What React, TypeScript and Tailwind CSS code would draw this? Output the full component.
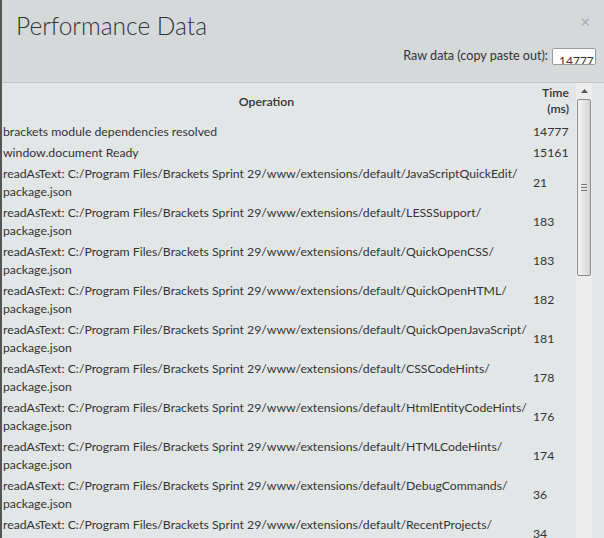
import React from "react"

const base = "C:/Program Files/Brackets Sprint 29/www/extensions/default/"

type Row = { op: string; sub?: string; ms: number }

const rows: Row[] = [
  { op: "brackets module dependencies resolved", ms: 14777 },
  { op: "window.document Ready", ms: 15161 },
  { op: "JavaScriptQuickEdit", sub: "package.json", ms: 21 },
  { op: "LESSSupport", sub: "package.json", ms: 183 },
  { op: "QuickOpenCSS", sub: "package.json", ms: 183 },
  { op: "QuickOpenHTML", sub: "package.json", ms: 182 },
  { op: "QuickOpenJavaScript", sub: "package.json", ms: 181 },
  { op: "CSSCodeHints", sub: "package.json", ms: 178 },
  { op: "HtmlEntityCodeHints", sub: "package.json", ms: 176 },
  { op: "HTMLCodeHints", sub: "package.json", ms: 174 },
  { op: "DebugCommands", sub: "package.json", ms: 36 },
  { op: "RecentProjects", sub: "package.json", ms: 34 },
]

function Scrollbar() {
  return (
    <div className="flex w-[16px] shrink-0 flex-col bg-[#ededee]">
      {/* up arrow */}
      <div className="flex h-[16px] items-center justify-center">
        <svg width="7" height="4" viewBox="0 0 7 4">
          <path d="M0 4 L3.5 0 L7 4 Z" fill="#555" />
        </svg>
      </div>
      {/* thumb */}
      <div className="mx-[1px] flex h-[177px] items-center justify-center rounded-[2px] border border-[#8c8c8c] bg-[linear-gradient(to_right,#f4f4f4,#e2e2e2_60%,#d4d4d4)]">
        <div className="flex flex-col gap-[2px]">
          <div className="h-px w-[6px] bg-[#777]" />
          <div className="h-px w-[6px] bg-[#777]" />
          <div className="h-px w-[6px] bg-[#777]" />
        </div>
      </div>
    </div>
  )
}

export default function App() {
  return (
    <div
      className="flex h-[538px] w-[604px] flex-col overflow-hidden border-l-2 border-[#555] bg-[#e3e6e7] text-[#333]"
      style={{ fontFamily: "Lato, 'Open Sans', sans-serif" }}
    >
      {/* Header */}
      <div className="relative h-[83px] shrink-0 border-b border-[#c2c6c7] bg-[#d5d9da]">
        <h1 className="pl-[14px] pt-[10px] text-[24.5px] leading-[32px] font-light text-[#303437]">
          Performance Data
        </h1>
        <span className="absolute right-[14px] top-[13px] text-[17px] leading-none text-[#a8abad]">
          ×
        </span>
        <div className="mt-[5px] flex items-center justify-end gap-[4px] pr-[8px]">
          <span className="text-[12.6px] text-[#333]">Raw data (copy paste out):</span>
          <div className="h-[17px] w-[44px] overflow-hidden rounded-[2px] border border-[#9a9a9a] bg-white pl-[6px] text-[12px] leading-[24px] text-[#333]">
            14777
          </div>
        </div>
      </div>

      {/* Body */}
      <div className="flex min-h-0 flex-1">
        <div className="min-w-0 flex-1 overflow-hidden">
          <table className="w-full table-fixed border-collapse text-[12.25px] leading-[18px]">
            <colgroup>
              <col className="w-[529px]" />
              <col />
            </colgroup>
            <thead>
              <tr className="h-[38px]">
                <th className="pb-[1px] text-center align-middle font-semibold">Operation</th>
                <th className="pr-[7px] pb-[2px] text-right align-middle leading-[16px] font-semibold">
                  Time
                  <br />
                  (ms)
                </th>
              </tr>
            </thead>
            <tbody>
              {rows.map((r, i) => (
                <tr key={i}>
                  <td className="py-[1.5px] pl-[1px] whitespace-nowrap">
                    {r.sub ? (
                      <>
                        {"readAsText: " + base + r.op + "/"}
                        <br />
                        {r.sub}
                      </>
                    ) : (
                      r.op
                    )}
                  </td>
                  <td className="py-[1.5px] pl-[2px] align-middle">{r.ms}</td>
                </tr>
              ))}
            </tbody>
          </table>
        </div>
        <Scrollbar />
        <div className="w-[12px] shrink-0" />
      </div>
    </div>
  )
}
